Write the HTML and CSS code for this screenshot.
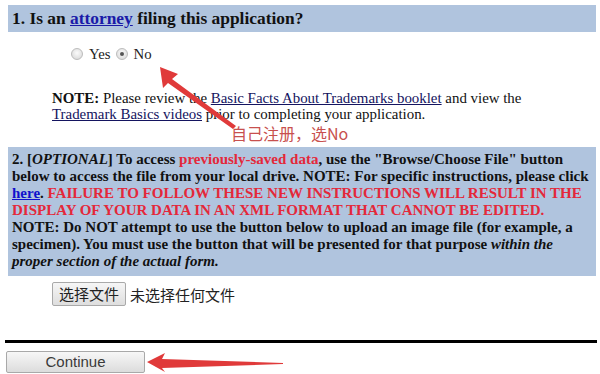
FILE: index.html
```html
<!DOCTYPE html>
<html>
<head>
<meta charset="utf-8">
<link rel="stylesheet" href="styles.css">
</head>
<body>
<div class="page">
  <div class="bar q1">1. Is an <a href="#" class="lnk-attorney">attorney</a> filing this application?</div>
  <div class="radios">
    <span class="radio"></span><span class="rlabel">Yes</span>
    <span class="radio checked"></span><span class="rlabel">No</span>
  </div>
  <div class="note">
    <b>NOTE:</b> Please review the <a href="#" class="lnk">Basic Facts About Trademarks booklet</a> and view the<br>
    <a href="#" class="lnk">Trademark Basics videos</a> prior to completing your application.
  </div>
  <div class="annot">自己注册，选No</div>
  <div class="bar q2">
    2. [<i>OPTIONAL</i>] To access <span class="red">previously-saved data</span>, use the "Browse/Choose File" button<br>
    below to access the file from your local drive. NOTE: For specific instructions, please click<br>
    <a href="#" class="lnk-here">here</a>. <span class="red">FAILURE TO FOLLOW THESE NEW INSTRUCTIONS WILL RESULT IN THE<br>
    DISPLAY OF YOUR DATA IN AN XML FORMAT THAT CANNOT BE EDITED.</span><br>
    NOTE: Do NOT attempt to use the button below to upload an image file (for example, a<br>
    specimen). You must use the button that will be presented for that purpose <i>within the</i><br>
    <i>proper section of the actual form.</i>
  </div>
  <div class="filerow">
    <span class="filebtn">选择文件</span><span class="filetext">未选择任何文件</span>
  </div>
  <div class="rule"></div>
  <div class="actions">
    <span class="continue">Continue</span>
  </div>
</div>
<svg class="arrow" width="600" height="374" viewBox="0 0 600 374">
  <polygon points="160,67 178,74 172,79 236,126 233,129 168,83 163,88" fill="#e03a3a"/>
  <polygon points="147,362 165,353 162,359 283,363 283,364 162,368 165,372" fill="#e03a3a"/>
</svg>
</body>
</html>
```

FILE: styles.css
```css
html, body {
  margin: 0;
  padding: 0;
  background: #fff;
}
body {
  font-family: "Liberation Serif", "Times New Roman", serif;
  color: #111;
  width: 600px;
  height: 374px;
  overflow: hidden;
  position: relative;
}
.page {
  padding-top: 5px;
}
.bar {
  background: #b0c4de;
  margin: 0 4px 0 8px;
  white-space: nowrap;
}
.q1 {
  font-weight: bold;
  font-size: 17.4px;
  line-height: 19px;
  height: 19px;
  padding: 4px 4px;
}
.lnk-attorney {
  color: #1a1aa8;
}
.radios {
  display: flex;
  align-items: center;
  padding-left: 71px;
  margin-top: 14px;
  height: 16px;
  font-size: 14.8px;
}
.radio {
  width: 10px;
  height: 10px;
  border-radius: 50%;
  border: 1px solid #bcbcbc;
  background: radial-gradient(circle at 50% 40%, #fbfbfb, #d4d4d4);
  margin-right: 6px;
  display: inline-flex;
  align-items: center;
  justify-content: center;
}
.radio.checked::after {
  content: "";
  width: 4px;
  height: 4px;
  border-radius: 50%;
  background: #555;
}
.rlabel {
  margin-right: 5px;
  color: #222;
}
.note {
  margin-top: 28px;
  padding-left: 52px;
  font-size: 14.9px;
  line-height: 16px;
  white-space: nowrap;
}
.lnk {
  color: #141460;
}
.annot {
  padding-left: 231px;
  font-family: "Noto Sans CJK SC", "Liberation Sans", sans-serif;
  font-size: 16px;
  line-height: 19px;
  color: #c8504e;
  height: 19px;
  padding-top: 2px;
  margin-bottom: 4px;
}
.q2 {
  padding: 4px 4px 6px 4px;
  font-weight: bold;
  font-size: 15px;
  line-height: 17px;
  height: 119px;
}
.red {
  color: #e4283a;
}
.lnk-here {
  color: #1010cc;
}
.filerow {
  display: flex;
  align-items: center;
  margin-top: 6px;
  padding-left: 52px;
  font-family: "Noto Sans CJK SC", "Liberation Sans", sans-serif;
  font-size: 15px;
}
.filebtn {
  display: inline-block;
  width: 72px;
  height: 22px;
  line-height: 22px;
  text-align: center;
  border: 1px solid #a9a9a9;
  border-radius: 2px;
  background: linear-gradient(#f6f6f6, #dedede);
  color: #222;
  margin-right: 4px;
}
.filetext {
  color: #222;
}
.rule {
  margin: 34px 3px 0 5px;
  height: 3px;
  background: #000;
}
.actions {
  padding: 8px 0 0 6px;
}
.continue {
  display: inline-block;
  width: 137px;
  height: 20px;
  line-height: 20px;
  text-align: center;
  border: 1px solid #a9a9a9;
  border-radius: 2px;
  background: linear-gradient(#f7f7f7, #dcdcdc);
  font-family: "Liberation Sans", Arial, sans-serif;
  font-size: 15px;
  color: #3a3a3a;
}
.arrow {
  position: absolute;
  left: 0;
  top: 0;
  pointer-events: none;
}
```
